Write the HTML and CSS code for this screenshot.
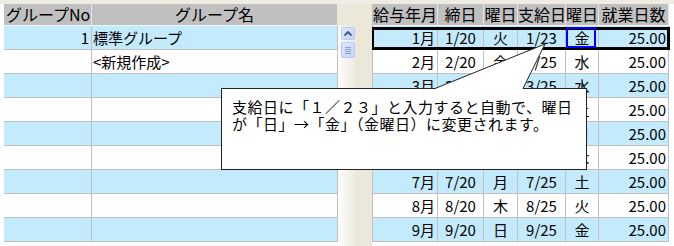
FILE: index.html
```html
<!DOCTYPE html>
<html lang="ja">

<head>
    <meta charset="UTF-8">
    <title>給与年月設定</title>
    <link rel="stylesheet" href="styles.css">
</head>

<body>
    <div class="screen">
        <div class="lpanel">
            <div class="lgrid">
                <div class="lrow head">
                    <div class="cell">グループNo</div>
                    <div class="cell">グループ名</div>
                </div>
                <div class="lrow blue">
                    <div class="cell num">1</div>
                    <div class="cell name">標準グループ</div>
                </div>
                <div class="lrow">
                    <div class="cell num"></div>
                    <div class="cell name">&lt;新規作成&gt;</div>
                </div>
                <div class="lrow blue"><div class="cell"></div><div class="cell"></div></div>
                <div class="lrow"><div class="cell"></div><div class="cell"></div></div>
                <div class="lrow blue"><div class="cell"></div><div class="cell"></div></div>
                <div class="lrow"><div class="cell"></div><div class="cell"></div></div>
                <div class="lrow blue"><div class="cell"></div><div class="cell"></div></div>
                <div class="lrow"><div class="cell"></div><div class="cell"></div></div>
                <div class="lrow blue"><div class="cell"></div><div class="cell"></div></div>
            </div>
        </div>

        <div class="gap">
            <div class="vscroll">
                <div class="sb-btn">
                    <svg width="8" height="5" viewBox="0 0 8 5"><polyline points="0.5,4.5 4,1 7.5,4.5" fill="none" stroke="#3b4f78" stroke-width="1.8"/></svg>
                </div>
                <div class="sb-thumb">
                    <span></span><span></span><span></span><span></span>
                </div>
            </div>
        </div>

        <div class="rpanel">
            <div class="rgrid" id="rgrid">
                <div class="rrow head">
                    <div class="cell">給与年月</div>
                    <div class="cell">締日</div>
                    <div class="cell">曜日</div>
                    <div class="cell">支給日</div>
                    <div class="cell">曜日</div>
                    <div class="cell">就業日数</div>
                </div>
            </div>
        </div>
    </div>

    <div class="callout">
        支給日に「１／２３」と入力すると自動で、曜日<br>
        が「日」→「金」（金曜日）に変更されます。
    </div>
    <svg class="tail" width="674" height="246">
        <polygon points="435,88.5 545,44 523,88.5 523,90 435,90" fill="#fff"/>
        <polyline points="435,88.5 545,44 523,88.5" fill="none" stroke="#222" stroke-width="1"/>
    </svg>

    <script>
        const months = [
            ["1月", "1/20", "火", "1/23", "金"],
            ["2月", "2/20", "金", "2/25", "水"],
            ["3月", "3/20", "金", "3/25", "水"],
            ["4月", "4/20", "月", "4/25", "土"],
            ["5月", "5/20", "水", "5/25", "月"],
            ["6月", "6/20", "土", "6/25", "木"],
            ["7月", "7/20", "月", "7/25", "土"],
            ["8月", "8/20", "木", "8/25", "火"],
            ["9月", "9/20", "日", "9/25", "金"]
        ];

        const grid = document.getElementById("rgrid");

        months.forEach((m, i) => {
            const row = document.createElement("div");
            row.className = "rrow" + (i % 2 === 0 ? " blue" : "") + (i === 0 ? " sel" : "");
            let payDay = m[4];
            if (i === 0) payDay = `<span class="focus"></span>${m[4]}`;
            row.innerHTML = `
                <div class="cell right">${m[0]}</div>
                <div class="cell">${m[1]}</div>
                <div class="cell">${m[2]}</div>
                <div class="cell">${m[3]}</div>
                <div class="cell">${payDay}</div>
                <div class="cell right">25.00</div>`;
            grid.appendChild(row);
        });
    </script>
</body>

</html>
```

FILE: styles.css
```css
* {
    box-sizing: border-box;
}

body {
    margin: 0;
    background: #efede3;
    font-family: "Noto Sans CJK JP", "Noto Sans", sans-serif;
    font-size: 15px;
    color: #000;
}

.screen {
    display: flex;
    width: 674px;
    height: 246px;
    padding-top: 4px;
    overflow: hidden;
}

/* left grid */
.lpanel {
    width: 338px;
    padding-left: 4px;
    background: #fff;
}

.lrow {
    display: grid;
    grid-template-columns: 88px 246px;
    height: 24px;
}

.lrow .cell,
.rrow .cell {
    height: 24px;
    line-height: 23px;
    border-right: 1px solid #c0c0c0;
    border-bottom: 1px solid #c0c0c0;
    white-space: nowrap;
}

.lrow.head,
.rrow.head {
    height: 22px;
}

.head .cell {
    height: 22px;
    line-height: 21px;
    background: #c0c0c0;
    border-right: 1px solid #e6e6e6;
    border-bottom: 1px solid #f2f2f2;
    text-align: center;
    font-size: 16px;
}

.lrow.head .cell:first-child {
    text-align: left;
    padding-left: 2px;
}

.blue .cell {
    background: #c4ebfd;
}

.cell.num {
    text-align: right;
    padding-right: 2px;
}

.cell.name {
    padding-left: 1px;
}

/* scrollbar + gap */
.gap {
    width: 34px;
    background: #ebe8d9;
    display: flex;
}

.vscroll {
    width: 17px;
    margin-top: 22px;
    background: linear-gradient(to right, #fdfdfb, #f3f2ec 60%, #eeece2);
    padding: 1px 1px 0 3px;
}

.sb-btn,
.sb-thumb {
    width: 14px;
    border: 1px solid #b9cbf3;
    border-radius: 2px;
    background: linear-gradient(135deg, #dde8fd, #c2d4fb);
}

.sb-btn {
    height: 13px;
    display: flex;
    align-items: center;
    justify-content: center;
}

.sb-thumb {
    height: 16px;
    margin-top: 2px;
    display: flex;
    flex-direction: column;
    align-items: center;
    justify-content: center;
    gap: 1px;
}

.sb-thumb span {
    width: 6px;
    height: 1px;
    background: #8ca3d2;
}

/* right grid */
.rpanel {
    flex: 1;
    background: #fff;
}

.rgrid {
    width: 297px;
    border-left: 1px solid #c0c0c0;
}

.rrow {
    display: grid;
    grid-template-columns: 65px 46px 34px 48px 33px 70px;
    height: 24px;
    position: relative;
    text-align: center;
}

.rrow .cell.right {
    text-align: right;
    padding-right: 2px;
}

.rrow.sel::after {
    content: "";
    position: absolute;
    left: -1px;
    right: -1px;
    top: 1px;
    bottom: 0;
    border: 3px solid #000;
    border-width: 3px 3px 3px 2px;
}

.rrow .cell {
    position: relative;
}

.focus {
    position: absolute;
    left: 0;
    right: 2px;
    top: 1px;
    bottom: 1px;
    border: 2px solid #0000ff;
    z-index: 2;
}

/* balloon */
.callout {
    position: absolute;
    left: 221px;
    top: 88px;
    width: 366px;
    height: 82px;
    background: #fff;
    border: 1px solid #222;
    padding: 9px 0 0 10px;
    font-size: 15px;
    line-height: 17px;
    letter-spacing: 0.5px;
}

.tail {
    position: absolute;
    left: 0;
    top: 0;
}
```
